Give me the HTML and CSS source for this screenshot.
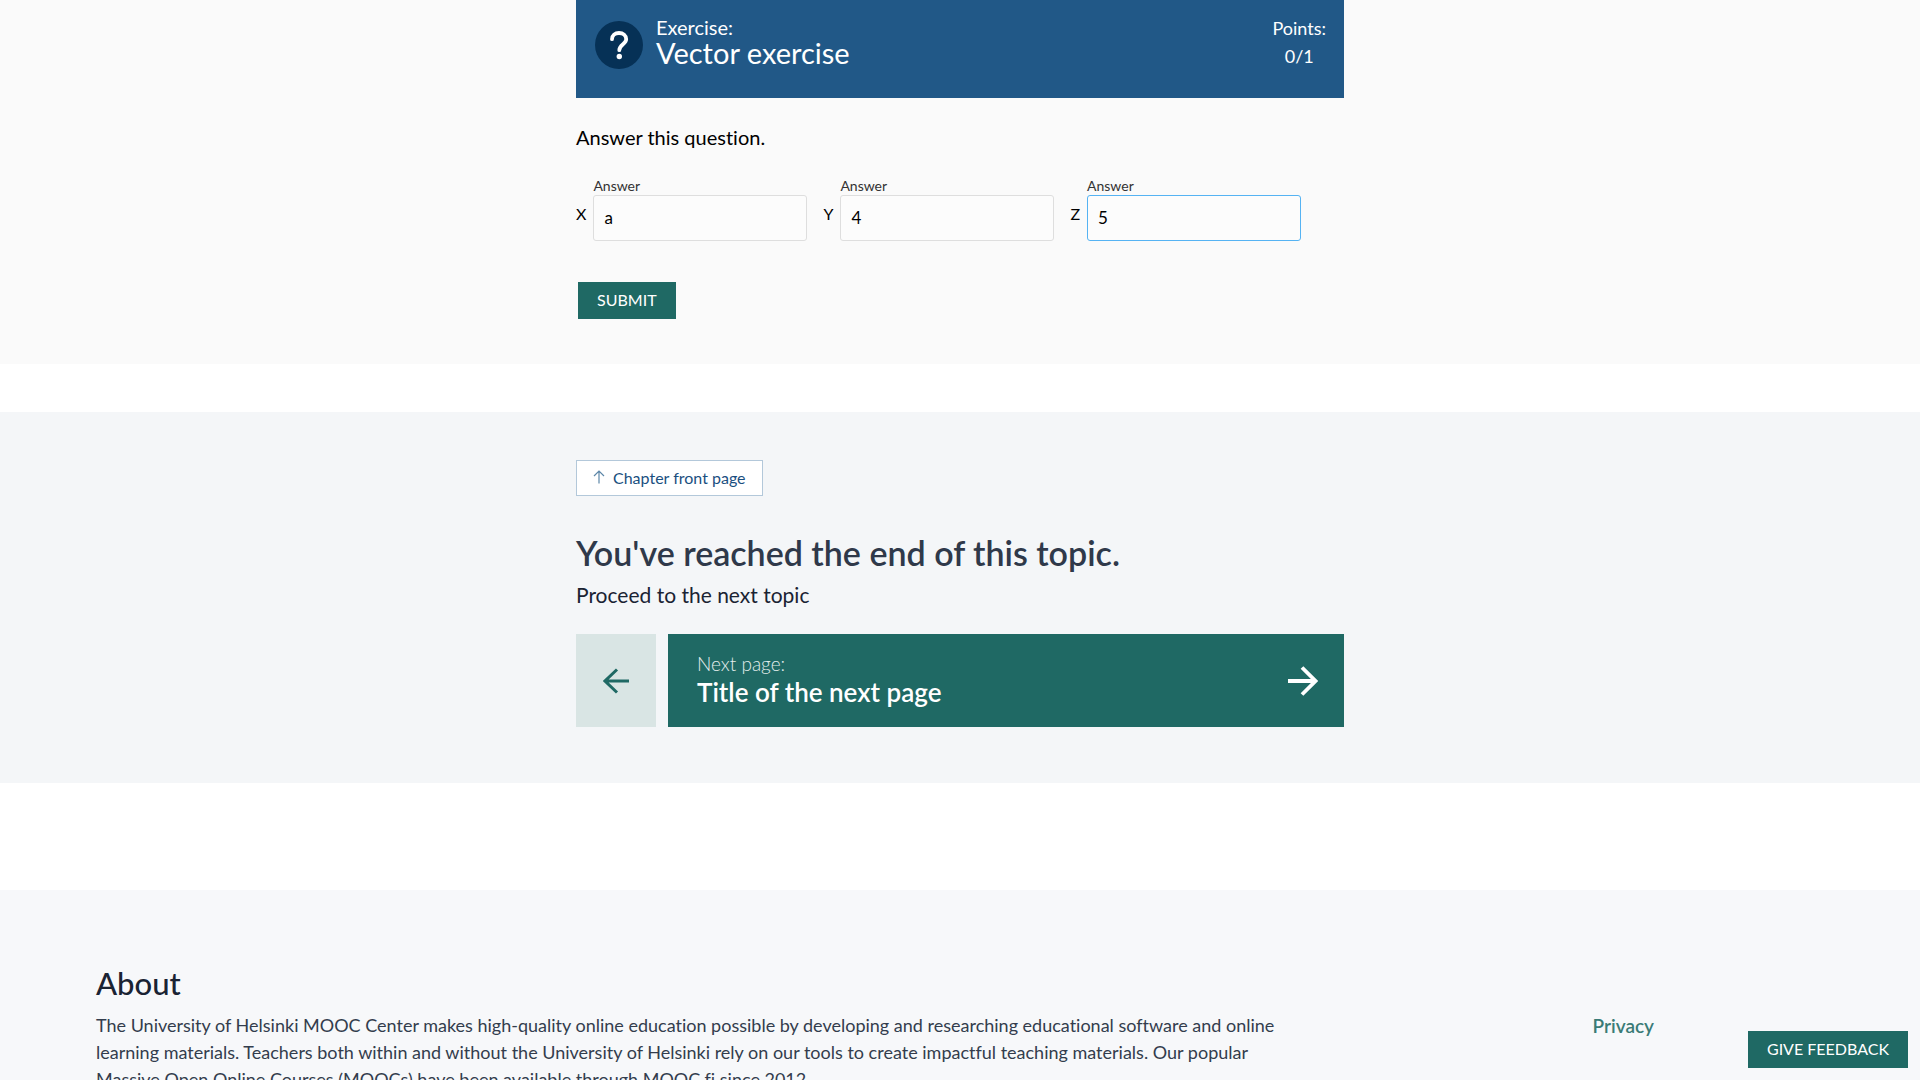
FILE: index.html
```html
<!DOCTYPE html>
<html lang="en">
<head>
<meta charset="utf-8">
<title>Vector exercise</title>
<link rel="stylesheet" href="styles.css">
</head>
<body>
<main>
  <section class="exercise">
    <div class="column">
      <header class="exercise-header">
        <svg class="help-icon" viewBox="0 0 48 48" aria-hidden="true">
          <circle cx="24" cy="24" r="24" fill="#063156"/>
          <path d="M17 18.2C17 14.5 20 12 24 12s7.200 2.600 7.200 6.300C31.200 23 24.300 23.500 24.300 29.200" fill="none" stroke="#fff" stroke-width="3.800" stroke-linecap="round"/>
          <circle cx="24.300" cy="35.500" r="2.700" fill="#fff"/>
        </svg>
        <h1 class="exercise-title"><span class="exercise-kind">Exercise:</span>Vector exercise</h1>
        <div class="points"><span>Points:</span><span>0/1</span></div>
      </header>
      <form class="answer-form">
        <p class="question">Answer this question.</p>
        <div class="fields">
          <div class="field"><span class="axis">X</span><div class="field-body"><label for="x">Answer</label><input id="x" type="text" value="a"></div></div>
          <div class="field"><span class="axis">Y</span><div class="field-body"><label for="y">Answer</label><input id="y" type="text" value="4"></div></div>
          <div class="field"><span class="axis">Z</span><div class="field-body"><label for="z">Answer</label><input id="z" class="active" type="text" value="5"></div></div>
        </div>
        <button class="button submit" type="button">SUBMIT</button>
      </form>
    </div>
  </section>

  <section class="navigation">
    <div class="column">
      <a class="chapter-link" href="#">
        <svg width="12" height="14" viewBox="0 0 12 14" aria-hidden="true"><path d="M6 13.500V1M1 6l5-5 5 5" fill="none" stroke="#5d87a8" stroke-width="1.200"/></svg>
        Chapter front page
      </a>
      <h2 class="end-title">You've reached the end of this topic.</h2>
      <p class="proceed">Proceed to the next topic</p>
      <nav class="pager">
        <a class="previous" href="#" aria-label="Previous page">
          <svg width="26" height="26" viewBox="0 0 26 26" aria-hidden="true"><path d="M26 13H2M14 1.500L2 13l12 11.500" fill="none" stroke="#1f6964" stroke-width="3"/></svg>
        </a>
        <a class="next" href="#">
          <span class="next-text"><span class="next-label">Next page:</span><span class="next-title">Title of the next page</span></span>
          <svg width="30" height="30" viewBox="0 0 30 30" aria-hidden="true"><path d="M0 15h27M14 1.500L27.500 15 14 28.500" fill="none" stroke="#fff" stroke-width="3.800"/></svg>
        </a>
      </nav>
    </div>
  </section>
</main>

<footer class="footer">
  <div class="about">
    <h2 class="about-title">About</h2>
    <p class="about-text">The University of Helsinki MOOC Center makes high-quality online education possible by developing and researching educational software and online learning materials. Teachers both within and without the University of Helsinki rely on our tools to create impactful teaching materials. Our popular Massive Open Online Courses (MOOCs) have been available through MOOC.fi since 2012.</p>
  </div>
  <a class="privacy" href="#">Privacy</a>
</footer>
<button class="button feedback" type="button">GIVE FEEDBACK</button>
</body>
</html>
```
FILE: styles.css
```css
* {
  box-sizing: border-box;
}

body {
  margin: 0;
  height: 100vh;
  overflow: hidden;
  background: #fff;
  color: #000;
  font-family: Lato, sans-serif;
  font-size: 18px;
  font-variant-ligatures: none;
}

h1, h2, p {
  margin: 0;
  font-weight: 400;
}

a {
  text-decoration: none;
}

svg {
  flex: none;
}

.column {
  max-width: 768px;
  margin: 0 auto;
}

.exercise {
  padding-bottom: 45px;
  background: #fafafa;
}

.exercise-header {
  display: flex;
  align-items: flex-start;
  padding: 14px 18px 28px;
  background: #215887;
  color: #fff;
}

.help-icon {
  width: 48px;
  height: 48px;
  margin: 7px 13px 0 1px;
}

.exercise-title {
  flex: 1;
  font-size: 29px;
  line-height: 26px;
}

.exercise-kind {
  display: block;
  font-size: 20px;
  line-height: 26px;
}

.points {
  display: flex;
  flex-direction: column;
  align-items: center;
  font-size: 18px;
  line-height: 28px;
}

.question {
  padding-top: 24px;
  font-size: 20px;
  line-height: 30px;
}

.fields {
  display: flex;
  gap: 16px;
  padding-top: 24px;
}

.field {
  display: flex;
  align-items: center;
  gap: 7px;
  font-size: 17px;
}

.axis {
  padding-top: 10px;
  font-size: 16px;
}

.field-body {
  display: flex;
  flex-direction: column;
}

.field label {
  color: #333;
  font-size: 14px;
  line-height: 19px;
}

.field input {
  width: 214px;
  height: 46px;
  padding: 0 10px 2px;
  border: 1px solid #dedede;
  border-radius: 3px;
  outline: 0;
  background: #fcfcfc;
  color: #000;
  font: inherit;
}

.field input.active {
  border-color: #55b3f3;
}

.button {
  height: 37px;
  padding: 0 19px 2px;
  border: 0;
  background: #1f6964;
  color: #fff;
  font-family: inherit;
  font-size: 16px;
}

.submit {
  display: block;
  margin: 41px 2px 0;
}

.navigation {
  margin-top: 48px;
  padding: 48px 0 56px;
  background: #f4f6f8;
}

.chapter-link {
  display: inline-flex;
  align-items: center;
  gap: 8px;
  height: 36px;
  padding: 0 16px 2px;
  border: 1px solid #b3c8da;
  background: #fff;
  color: #1a4f7f;
  font-size: 16px;
}

.end-title {
  padding-top: 35px;
  color: #2f394a;
  font-size: 34px;
  font-weight: 600;
  line-height: 44px;
}

.proceed {
  padding-top: 4px;
  color: #1a2333;
  font-size: 21px;
  line-height: 32px;
}

.pager {
  display: flex;
  gap: 12px;
  padding-top: 23px;
}

.previous {
  display: flex;
  align-items: center;
  justify-content: center;
  width: 80px;
  background: #d9e5e4;
}

.next {
  display: flex;
  flex: 1;
  align-items: center;
  justify-content: space-between;
  padding: 16px 26px 16px 29px;
  background: #1f6964;
  color: #fff;
}

.next-text {
  display: flex;
  flex-direction: column;
  padding-bottom: 5px;
}

.next-label {
  color: #e3edec;
  font-size: 19px;
  font-weight: 300;
  line-height: 28px;
}

.next-title {
  font-size: 26px;
  font-weight: 600;
  line-height: 28px;
}

.footer {
  display: flex;
  justify-content: space-between;
  margin-top: 107px;
  padding: 72px 266px 64px 96px;
  background: #f7f8fa;
}

.about {
  flex: 0 1 1190px;
}

.about-title {
  color: #1a2333;
  font-size: 31px;
  font-weight: 500;
  line-height: 42px;
}

.about-text {
  padding-top: 8px;
  color: #333d4d;
  font-size: 18px;
  line-height: 27px;
}

.privacy {
  padding-top: 50px;
  color: #3a7b76;
  font-size: 19px;
  font-weight: 600;
  line-height: 27px;
}

.feedback {
  position: fixed;
  right: 12px;
  bottom: 12px;
}
```
